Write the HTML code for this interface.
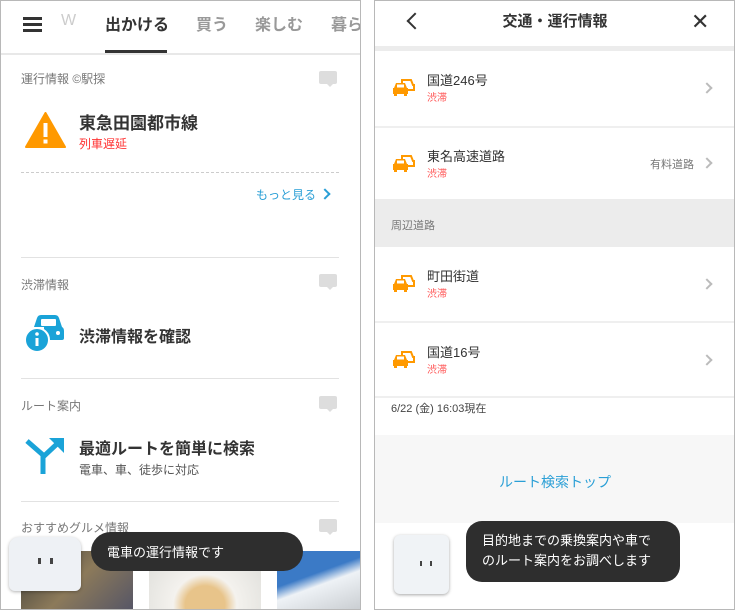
<!DOCTYPE html>
<html><head><meta charset="utf-8"><style>
*{margin:0;padding:0;box-sizing:border-box}
body{width:735px;height:610px;background:#fff;position:relative;overflow:hidden;font-family:"Liberation Sans","Noto Sans CJK JP",sans-serif;color:#333}
.a{position:absolute;white-space:nowrap}
.p{position:absolute;top:0;height:610px;border:1px solid #b8b8b8;overflow:hidden;background:#fff}
.lbl{font-size:12px;color:#777}
.hr{position:absolute;height:1px;background:#e2e2e2}
.t{font-size:16px;font-weight:bold;color:#333}
.red{color:#f33}
.cm{position:absolute;width:18px;height:13px;background:#ddd;border-radius:2px}
.cm:after{content:"";position:absolute;left:7px;top:12px;border:4px solid transparent;border-top-color:#ddd}
.rt{font-size:13px;color:#333}
.rs{font-size:10px;color:#f55}
.chev{position:absolute;width:8px;height:8px;border-top:2px solid #bbb;border-right:2px solid #bbb;transform:rotate(45deg)}
</style></head><body>
<!-- LEFT PANEL -->
<div class="p" style="left:0;width:361px">
 <div class="a" style="left:22px;top:16px;width:19px;height:3px;background:#333;box-shadow:0 6px 0 #333,0 12px 0 #333"></div>
 <div class="a" style="left:60px;top:11px;font-size:16px;color:#ccc">W</div>
 <div class="a" style="left:104px;top:10px;font-size:16px;font-weight:bold;color:#333">出かける</div>
 <div class="a" style="left:104px;top:49px;width:62px;height:3px;background:#333"></div>
 <div class="a" style="left:195px;top:10px;font-size:16px;font-weight:bold;color:#999">買う</div>
 <div class="a" style="left:254px;top:10px;font-size:16px;font-weight:bold;color:#999">楽しむ</div>
 <div class="a" style="left:330px;top:10px;font-size:16px;font-weight:bold;color:#999">暮ら</div>
 <div class="a" style="left:0;top:52px;width:360px;height:2px;background:#e8e8e8"></div>

 <div class="a lbl" style="left:20px;top:69px">運行情報 ©駅探</div>
 <div class="cm" style="left:318px;top:70px"></div>
 <svg class="a" style="left:24px;top:111px" width="41" height="36" viewBox="0 0 41 36"><path d="M20.5 1 L40 35 H1 Z" fill="#f90" stroke="#f90" stroke-linejoin="round" stroke-width="2"/><rect x="18.5" y="11" width="4" height="14" fill="#fff"/><rect x="18.5" y="27.5" width="4" height="4" fill="#fff"/></svg>
 <div class="a" style="left:78px;top:108px;font-size:17px;font-weight:bold">東急田園都市線</div>
 <div class="a red" style="left:78px;top:134px;font-size:12px">列車遅延</div>
 <div class="a" style="left:20px;top:171px;width:318px;border-top:1px dashed #ccc"></div>
 <div class="a" style="left:255px;top:185px;font-size:12px;color:#2a9fd6">もっと見る</div>
 <div class="a" style="left:320px;top:189px;width:8px;height:8px;border-top:2px solid #2a9fd6;border-right:2px solid #2a9fd6;transform:rotate(45deg)"></div>
 <div class="hr" style="left:20px;top:256px;width:318px"></div>

 <div class="a lbl" style="left:20px;top:275px">渋滞情報</div>
 <div class="cm" style="left:318px;top:273px"></div>
 <svg class="a" style="left:23px;top:312px" width="42" height="40" viewBox="0 0 42 40"><path d="M10 14 L13 5 Q14 2 17 2 H31 Q34 2 35 5 L38 14 Q40 15 40 18 V25 Q40 27 38 27 H20 V14 Z" fill="#1aa3d8"/><rect x="17" y="6" width="15" height="7" fill="#fff" rx="1"/><circle cx="34" cy="20" r="2" fill="#fff"/><circle cx="13" cy="27" r="12" fill="#1aa3d8" stroke="#fff" stroke-width="2"/><rect x="11.5" y="25" width="3" height="8" fill="#fff"/><circle cx="13" cy="21" r="1.8" fill="#fff"/></svg>
 <div class="a t" style="left:78px;top:322px">渋滞情報を確認</div>
 <div class="hr" style="left:20px;top:377px;width:318px"></div>

 <div class="a lbl" style="left:20px;top:396px">ルート案内</div>
 <div class="cm" style="left:318px;top:395px"></div>
 <svg class="a" style="left:24px;top:436px" width="40" height="38" viewBox="0 0 40 38"><path d="M2 4 L18 18 V37" fill="none" stroke="#1aa3d8" stroke-width="5"/><path d="M18 20 L33 6" fill="none" stroke="#1aa3d8" stroke-width="5"/><path d="M24 1 H39 V16 Z" fill="#1aa3d8"/></svg>
 <div class="a t" style="left:78px;top:434px">最適ルートを簡単に検索</div>
 <div class="a" style="left:78px;top:460px;font-size:12px;color:#555">電車、車、徒歩に対応</div>
 <div class="hr" style="left:20px;top:500px;width:318px"></div>

 <div class="a lbl" style="left:20px;top:518px">おすすめグルメ情報</div>
 <div class="cm" style="left:318px;top:518px"></div>
 <div class="a" style="left:20px;top:550px;width:112px;height:60px;background:linear-gradient(135deg,#3a3a36,#8c7a5a 50%,#556 100%)"></div>
 <div class="a" style="left:148px;top:550px;width:112px;height:60px;background:radial-gradient(ellipse at 50% 90%,#e8c48a 0 25%,#f4f2ee 40%,#dcdcd8 100%)"></div>
 <div class="a" style="left:276px;top:550px;width:84px;height:60px;background:linear-gradient(160deg,#3b7ac6 0 40%,#eef2f6 55%,#c8ccd0 100%)"></div>
 <div class="a" style="left:8px;top:536px;width:72px;height:54px;background:#eef1f5;border-radius:10px 10px 6px 6px;box-shadow:0 1px 3px rgba(0,0,0,.3)"></div>
 <div class="a" style="left:37px;top:557px;width:3px;height:6px;background:#444;box-shadow:12px 0 0 #444"></div>
 <div class="a" style="left:90px;top:531px;width:212px;height:39px;background:#2e2e2e;border-radius:20px"></div>
 <div class="a" style="left:106px;top:541px;font-size:13px;color:#fff">電車の運行情報です</div>
</div>

<!-- RIGHT PANEL -->
<div class="p" style="left:374px;width:361px">
 <div class="a" style="left:34px;top:14px;width:12px;height:12px;border-left:2px solid #333;border-bottom:2px solid #333;transform:rotate(45deg)"></div>
 <div class="a" style="left:0;width:360px;top:9px;text-align:center;font-size:15px;font-weight:bold">交通・運行情報</div>
 <div class="a" style="left:316px;top:8px;font-size:22px;color:#333">✕</div>
 <div class="a" style="left:0;top:45px;width:360px;height:5px;background:#ececec"></div>

 <div class="a" style="left:0;top:125px;width:360px;height:2px;background:#efefef"></div>
 <div class="a" style="left:0;top:198px;width:360px;height:48px;background:#ececec"></div>
 <div class="a" style="left:16px;top:216px;font-size:11px;color:#777">周辺道路</div>
 <div class="a" style="left:0;top:320px;width:360px;height:2px;background:#efefef"></div>
 <div class="a" style="left:0;top:395px;width:360px;height:2px;background:#efefef"></div>

 <div class="a rt" style="left:52px;top:69px">国道246号</div><div class="a rs" style="left:52px;top:88px">渋滞</div><div class="chev" style="left:328px;top:83px"></div>
 <div class="a rt" style="left:52px;top:145px">東名高速道路</div><div class="a rs" style="left:52px;top:164px">渋滞</div><div class="a" style="left:275px;top:155px;font-size:11px;color:#777">有料道路</div><div class="chev" style="left:328px;top:158px"></div>
 <div class="a rt" style="left:52px;top:265px">町田街道</div><div class="a rs" style="left:52px;top:284px">渋滞</div><div class="chev" style="left:328px;top:279px"></div>
 <div class="a rt" style="left:52px;top:341px">国道16号</div><div class="a rs" style="left:52px;top:360px">渋滞</div><div class="chev" style="left:328px;top:355px"></div>

 <svg class="a" style="left:18px;top:77px" width="22" height="20" viewBox="0 0 22 20"><path d="M9 2 H18 L20 7 H21 V12 H9 Z" fill="none" stroke="#f90" stroke-width="2"/><path d="M1 10 L3 5 H12 L14 10 H15 V16 H0 V10 Z" fill="#f90"/><rect x="4" y="6.5" width="7" height="3" fill="#fff"/><rect x="1" y="15" width="3" height="3" fill="#f90"/><rect x="11" y="15" width="3" height="3" fill="#f90"/></svg>
 <svg class="a" style="left:18px;top:153px" width="22" height="20" viewBox="0 0 22 20"><path d="M9 2 H18 L20 7 H21 V12 H9 Z" fill="none" stroke="#f90" stroke-width="2"/><path d="M1 10 L3 5 H12 L14 10 H15 V16 H0 V10 Z" fill="#f90"/><rect x="4" y="6.5" width="7" height="3" fill="#fff"/><rect x="1" y="15" width="3" height="3" fill="#f90"/><rect x="11" y="15" width="3" height="3" fill="#f90"/></svg>
 <svg class="a" style="left:18px;top:273px" width="22" height="20" viewBox="0 0 22 20"><path d="M9 2 H18 L20 7 H21 V12 H9 Z" fill="none" stroke="#f90" stroke-width="2"/><path d="M1 10 L3 5 H12 L14 10 H15 V16 H0 V10 Z" fill="#f90"/><rect x="4" y="6.5" width="7" height="3" fill="#fff"/><rect x="1" y="15" width="3" height="3" fill="#f90"/><rect x="11" y="15" width="3" height="3" fill="#f90"/></svg>
 <svg class="a" style="left:18px;top:349px" width="22" height="20" viewBox="0 0 22 20"><path d="M9 2 H18 L20 7 H21 V12 H9 Z" fill="none" stroke="#f90" stroke-width="2"/><path d="M1 10 L3 5 H12 L14 10 H15 V16 H0 V10 Z" fill="#f90"/><rect x="4" y="6.5" width="7" height="3" fill="#fff"/><rect x="1" y="15" width="3" height="3" fill="#f90"/><rect x="11" y="15" width="3" height="3" fill="#f90"/></svg>

 <div class="a" style="left:16px;top:399px;font-size:11px;color:#444">6/22 (金) 16:03現在</div>
 <div class="a" style="left:0;top:434px;width:360px;height:88px;background:#f7f7f7"></div>
 <div class="a" style="left:0;width:360px;top:471px;text-align:center;font-size:14px;color:#2a9fd6">ルート検索トップ</div>
 <div class="a" style="left:19px;top:534px;width:55px;height:59px;background:#f0f3f6;border-radius:6px;box-shadow:0 1px 3px rgba(0,0,0,.35)"></div>
 <div class="a" style="left:45px;top:560px;width:2px;height:5px;background:#444;box-shadow:10px 0 0 #444"></div>
 <div class="a" style="left:91px;top:520px;width:214px;height:61px;background:#2e2e2e;border-radius:16px"></div>
 <div class="a" style="left:107px;top:530px;font-size:13px;line-height:20px;color:#fff">目的地までの乗換案内や車で<br>のルート案内をお調べします</div>
</div>
</body></html>
